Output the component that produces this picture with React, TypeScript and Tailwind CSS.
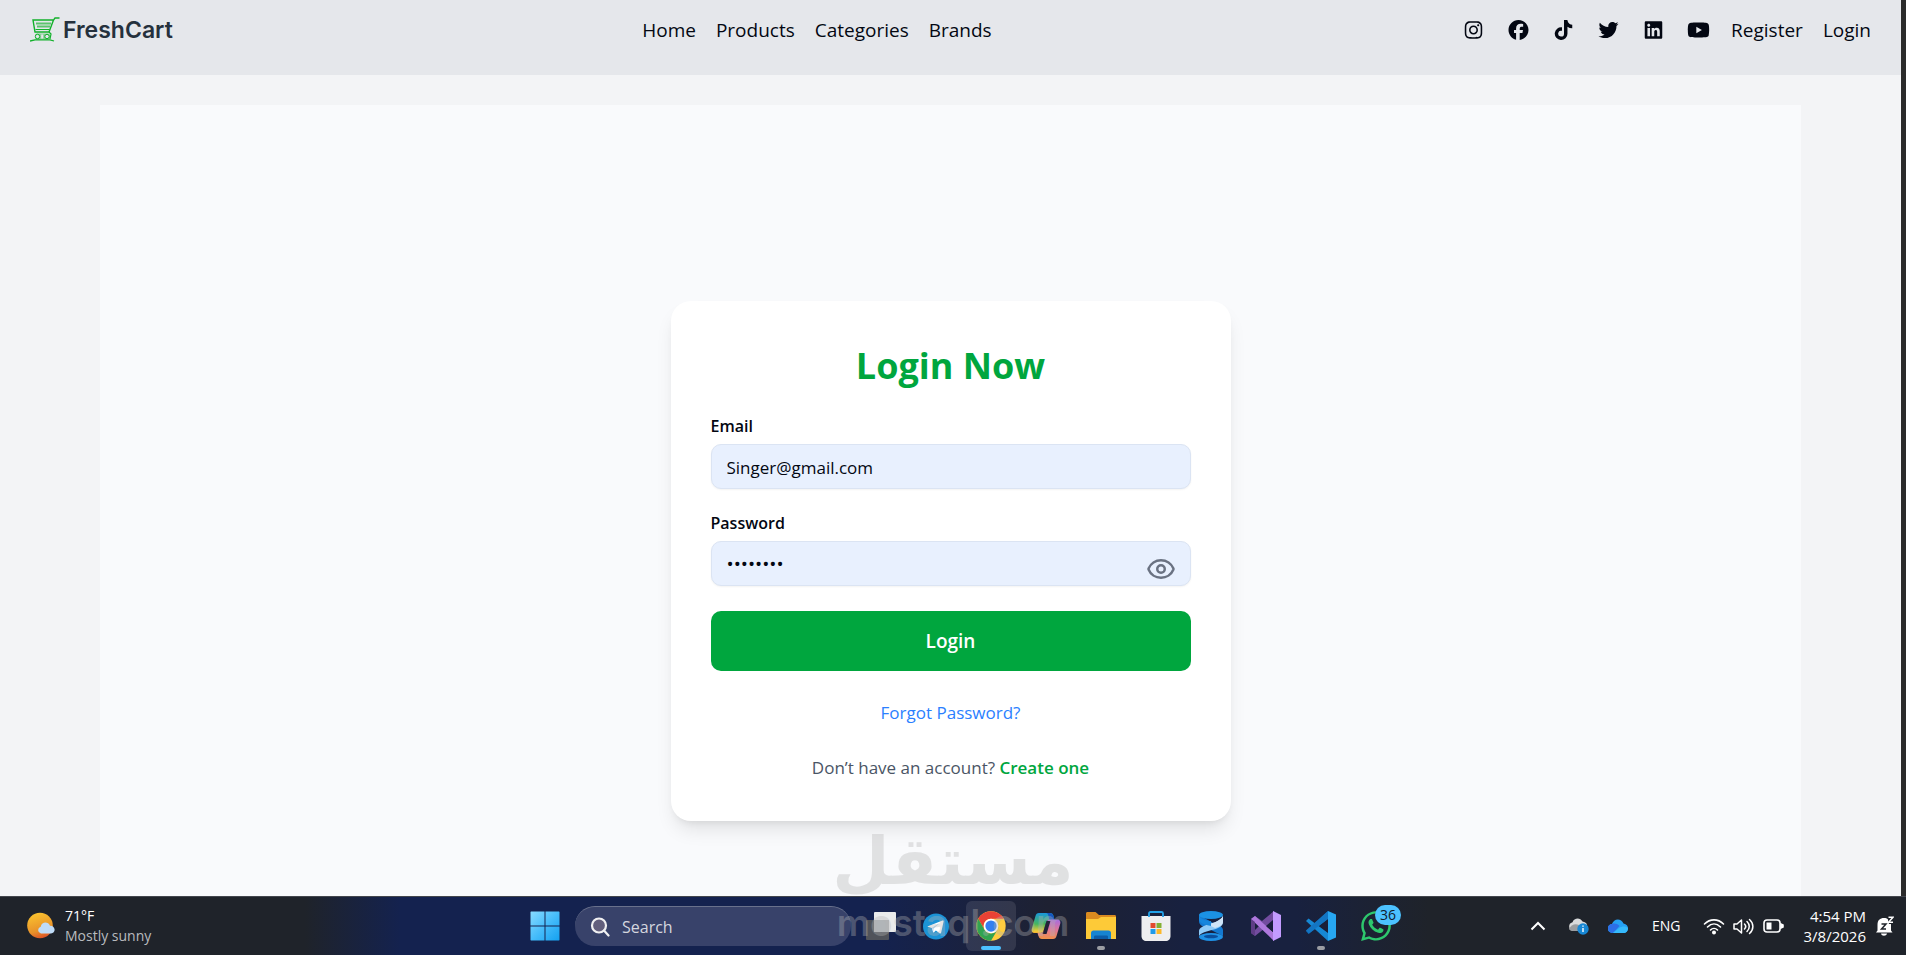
import { useState } from 'react';
import type { ReactNode } from 'react';
import { Eye, EyeOff } from 'lucide-react';
import { FaFacebook, FaInstagram, FaLinkedin, FaTiktok, FaTwitter, FaWhatsapp, FaYoutube } from 'react-icons/fa6';

const links = ['Home', 'Products', 'Categories', 'Brands'];

const socials = [
  { name: 'Instagram', Icon: FaInstagram },
  { name: 'Facebook', Icon: FaFacebook },
  { name: 'TikTok', Icon: FaTiktok },
  { name: 'Twitter', Icon: FaTwitter },
  { name: 'LinkedIn', Icon: FaLinkedin },
  { name: 'YouTube', Icon: FaYoutube },
];

function Logo() {
  return (
    <a href="#" className="flex items-center gap-[3px]">
      <svg width="30" height="26" viewBox="0 0 30 26" fill="none" stroke="#12b12b">
        <path d="M29.500 1H25l-1.500 2L19 15H5L3 3h20" strokeWidth="1.400" />
        <path d="M6 6.500h15M7 9.500h13" strokeWidth="2" strokeOpacity=".65" />
        <path d="M5.500 12.500h14M19 15l2 2-1 5" strokeWidth="1.200" />
        <rect x="5" y="16.500" width="15" height="6" rx="2" fill="#12b12b" fillOpacity=".45" stroke="none" />
        <circle cx="7.500" cy="19.500" r="2.200" fill="#e5e7eb" />
        <circle cx="17" cy="19.500" r="2.200" fill="#e5e7eb" />
        <path d="M12.200 17.500v4" stroke="#e5e7eb" strokeWidth="2" />
        <path d="M0 24l5-1.200h15l4 1.200" strokeWidth="1.300" />
      </svg>
      <span className="font-[Inter,sans-serif] text-[23px] leading-[30px] font-semibold text-[#25313d]">FreshCart</span>
    </a>
  );
}

function Navbar() {
  return (
    <header className="flex items-start justify-between bg-gray-200 px-[30px] pt-[15px] pb-[30px] text-[19px] leading-[30px] text-gray-950">
      <Logo />
      <nav className="flex gap-5">
        {links.map((link) => (
          <a key={link} href="#">{link}</a>
        ))}
      </nav>
      <div className="flex items-center gap-5">
        {socials.map(({ name, Icon }) => (
          <a key={name} href="#" aria-label={name}>
            <Icon className="h-5 w-[25px]" />
          </a>
        ))}
        <a href="#">Register</a>
        <a href="#">Login</a>
      </div>
    </header>
  );
}

function LoginCard() {
  const [showPassword, setShowPassword] = useState(false);
  const input = 'block h-[45px] w-full rounded-[10px] border border-[#dbe4f3] bg-[#e8f0fe] px-[15px] text-gray-950 shadow-xs outline-none';

  return (
    <form className="w-full max-w-[560px] rounded-[20px] bg-white px-10 pt-10 pb-[41px] text-[17px] leading-[25px] shadow-[0_12px_19px_-4px_rgba(0,0,0,0.1),0_5px_8px_-5px_rgba(0,0,0,0.1)]">
      <h1 className="mb-[23px] text-center text-4xl leading-[50px] font-bold text-[#00a63e]">Login Now</h1>

      <label htmlFor="email" className="mb-[5px] block text-base leading-[25px] font-semibold text-gray-950">Email</label>
      <input id="email" type="email" defaultValue="Singer@gmail.com" className={`${input} pt-px text-[17px]`} />

      <label htmlFor="password" className="mt-[22px] mb-[5px] block text-base leading-[25px] font-semibold text-gray-950">Password</label>
      <div className="relative">
        <input id="password" type={showPassword ? 'text' : 'password'} defaultValue="12345678" className={`${input} text-[19px]`} />
        <button
          type="button"
          aria-label="Toggle password"
          onClick={() => setShowPassword(!showPassword)}
          className="absolute top-[13px] right-[15px] text-[#6a7282]"
        >
          {showPassword ? <EyeOff size={30} /> : <Eye size={30} />}
        </button>
      </div>

      <button type="submit" className="mt-[25px] h-[60px] w-full rounded-[10px] bg-[#00a63e] pt-px text-[19px] font-semibold text-white">
        Login
      </button>

      <p className="mt-[29px] text-center">
        <a href="#" className="text-[#2b7fff]">Forgot Password?</a>
      </p>
      <p className="mt-[30px] text-center text-[#4a5565]">
        Don’t have an account? <a href="#" className="font-semibold text-[#00a63e]">Create one</a>
      </p>
    </form>
  );
}

function TaskButton({ label, active, running, children }: { label: string; active?: boolean; running?: boolean; children: ReactNode }) {
  return (
    <button
      aria-label={label}
      className={`relative flex h-[50px] w-[50px] items-center justify-center rounded-md ${active ? 'bg-white/10' : ''}`}
    >
      {children}
      {active && <span className="absolute bottom-px h-1 w-5 rounded-full bg-[#4cc2ff]" />}
      {running && <span className="absolute bottom-px h-1 w-2 rounded-full bg-[#9b9da3]" />}
    </button>
  );
}

function TaskbarApps() {
  return (
    <div className="flex items-center gap-[5px]">
      <TaskButton label="Start">
        <svg width="30" height="30" viewBox="0 0 30 30">
          <defs>
            <linearGradient id="win" x1="0" y1="0" x2="30" y2="30" gradientUnits="userSpaceOnUse">
              <stop stopColor="#8adcff" />
              <stop offset=".5" stopColor="#47bdfb" />
              <stop offset="1" stopColor="#12a0f0" />
            </linearGradient>
          </defs>
          <path fill="url(#win)" d="M1 .5h13.500v14H.5V1zM15.500.500H29l.5.500v13.500h-14zM.5 15.500h14v14H1l-.5-.5zM15.500 15.500h14V29l-.5.500H15.500z" />
        </svg>
      </TaskButton>

      <label className="flex h-10 w-[276px] items-center gap-3 rounded-full border-t border-[#69718c] bg-[#38426a] pl-[15px] text-[#d4d6df]">
        <svg width="20" height="20" viewBox="0 0 20 20" fill="#625f7d" stroke="#f0f0f2" strokeWidth="2.200" strokeLinecap="round">
          <circle cx="9" cy="8.500" r="7" />
          <path d="M14 13.500l4.500 5" />
        </svg>
        <input
          type="text"
          aria-label="Search"
          placeholder="Search"
          className="w-[160px] bg-transparent text-base outline-none placeholder:text-[#d4d6df]"
        />
      </label>

      <TaskButton label="Task view">
        <svg width="32" height="30" viewBox="0 0 32 30">
          <rect x="1" y="9" width="23" height="20" rx="1" fill="#50535a" />
          <rect x="9" y="1" width="22" height="20" rx="1" fill="#e9ebec" />
          <rect x="9" y="9" width="15" height="12" fill="#b1b5b8" />
        </svg>
      </TaskButton>

      <TaskButton label="Telegram">
        <svg width="26" height="27" viewBox="0 0 26 26">
          <circle cx="13" cy="13" r="13" fill="#1c93d6" />
          <path d="M5 12.700L19.500 7c.8-.3 1.300.2 1.100 1.100l-2.400 11c-.2.900-.9 1.100-1.600.6l-3.700-2.700-1.900 1.800c-.3.300-.8.300-.9-.1l-1.300-4.300-3.700-1.100c-.7-.2-.7-.4-.1-.6z" fill="#fff" />
          <path d="M9 14.200l8-5-6.400 6.100-.3 3.200z" fill="#b8d7ec" />
        </svg>
      </TaskButton>

      <TaskButton label="Chrome" active>
        <svg width="30" height="30" viewBox="0 0 48 48">
          <circle cx="24" cy="24" r="23.500" fill="#ffcd40" />
          <path d="M3.650 12.250A23.500 23.500 0 0144.350 12.250H24A12 12 0 0013.600 30z" fill="#e94235" />
          <path d="M3.650 12.250A23.500 23.500 0 0024 47.500L34.400 30A12 12 0 0113.600 30z" fill="#31a350" />
          <circle cx="24" cy="24" r="11.700" fill="#fff" />
          <circle cx="24" cy="24" r="9" fill="#347ff0" />
        </svg>
      </TaskButton>

      <TaskButton label="Copilot">
        <svg width="30" height="28" viewBox="0 0 30 28">
          <defs>
            <linearGradient id="cop1" x1="6" y1="0" x2="6" y2="24" gradientUnits="userSpaceOnUse">
              <stop stopColor="#1695e8" />
              <stop offset=".5" stopColor="#46b65d" />
              <stop offset=".8" stopColor="#f2cb37" />
              <stop offset="1" stopColor="#f07a2a" />
            </linearGradient>
            <linearGradient id="cop2" x1="22" y1="6" x2="20" y2="27" gradientUnits="userSpaceOnUse">
              <stop stopColor="#a16be8" />
              <stop offset=".55" stopColor="#df7799" />
              <stop offset="1" stopColor="#f0914c" />
            </linearGradient>
          </defs>
          <path d="M8 1h11c2 0 3 1 3.500 3l1 4h-5c-2 0-3 1-3.500 3l-2 7c-.5 2-1.500 3-3.500 3H4C1 21 0 19 1 16L4.500 4C5 2 6 1 8 1z" fill="url(#cop1)" />
          <path d="M18.500 1c2 0 3.500 1 4 3l1 4h-5l-1-4c-.5-2-1-3-2.500-3z" fill="#1557c0" />
          <path d="M22 27H11c-2 0-3-1-3.500-3l-1-3h3c2 0 3-1 3.500-3l2.500-8c.5-1.500 1.500-2.500 3.500-2.500h7c3 0 4 2 3 5L25.500 24c-.5 2-1.500 3-3.500 3z" fill="url(#cop2)" />
          <path d="M15.500 9h4l-4 13h-4z" fill="#232338" />
        </svg>
      </TaskButton>

      <TaskButton label="File Explorer" running>
        <svg width="30" height="28" viewBox="0 0 30 28">
          <path d="M0 1.500C0 .7.500 0 1.500 0h8L13 3h15.500c1 0 1.500.5 1.500 1.500V10H0z" fill="#da8b20" />
          <path d="M0 7h12l3-2h15v22H0z" fill="#fdca38" />
          <path d="M5 27v-6c0-1.500 1-2.500 2.500-2.500h15c1.500 0 2.500 1 2.500 2.500v6z" fill="#1784d1" />
          <path d="M8 27v-2c0-1 .5-1.500 1.500-1.500h11c1 0 1.500.5 1.500 1.500v2z" fill="#0c5ca8" />
        </svg>
      </TaskButton>

      <TaskButton label="Microsoft Store">
        <svg width="30" height="30" viewBox="0 0 30 30">
          <path d="M.5 5h29v20c0 3-2 5-5 5h-19c-3 0-5-2-5-5z" fill="#eeeeef" />
          <path d="M8 6V2.500C8 1.500 8.500 1 9.500 1h11c1 0 1.500.5 1.500 1.500V6" fill="none" stroke="#22a2e8" strokeWidth="1.800" />
          <path d="M9.500 12h5v5h-5z" fill="#e24a2e" />
          <path d="M15.500 12h5v5h-5z" fill="#83b034" />
          <path d="M9.500 18h5v5h-5z" fill="#1f9bea" />
          <path d="M15.500 18h5v5h-5z" fill="#fdb928" />
        </svg>
      </TaskButton>

      <TaskButton label="SQL Server Management Studio">
        <svg width="24" height="30" viewBox="0 0 24 30">
          <path d="M0 4v6c0 4 4 6 9 7.500L24 25v-6c0-3-4-5-9-6.500z" fill="#1479d0" />
          <path d="M0 26v-6c0-3 4-5 9-6.500C15 12 24 9 24 4v7c0 4-4 6-9 7.500C9 20 0 22 0 26z" fill="#8fcbf7" />
          <path d="M24 5v6c0 3-4 5-8 6l-7-3.500C15 12 22 9 24 5z" fill="#cfe4f6" />
          <ellipse cx="12" cy="4" rx="12" ry="4" fill="#1b92e4" />
          <path d="M0 4c1 5 10 6 12 6v5C6 14 0 12 0 8z" fill="#1686dc" />
          <ellipse cx="12" cy="26" rx="12" ry="4" fill="#1f91e5" />
          <ellipse cx="12" cy="25.500" rx="7" ry="1.800" fill="#0b4f9c" />
        </svg>
      </TaskButton>

      <TaskButton label="Visual Studio">
        <svg width="30" height="30" viewBox="0 0 30 30">
          <path d="M0 8l4-3 7 5 12-10v10L4 25l-4-3z" fill="#724c9f" />
          <path d="M4 11v8l4-4z" fill="#191f3d" />
          <path d="M0 8l4-3 19 17v8z" fill="#ad78dc" />
          <path d="M0 8v14l4 3V11z" fill="#5e3d86" />
          <path d="M22 0l8 4v22l-8 4z" fill="#c39bff" />
          <path d="M22 9v12l-7-6z" fill="#191f3d" />
        </svg>
      </TaskButton>

      <TaskButton label="VS Code" running>
        <svg width="30" height="30" viewBox="0 0 30 30">
          <path d="M0 20l2.500 3L22 8V0z" fill="#0b67b5" />
          <path d="M0 10l2.500-2.500L22 22v8z" fill="#1688d4" />
          <path d="M0 19.500L22 0v8L3 22.500z" fill="#1375c2" />
          <path d="M22 0l8 3.500v23L22 30z" fill="#27a7f2" />
          <path d="M22 8.500v13L13.500 15z" fill="#1a2039" />
        </svg>
      </TaskButton>

      <TaskButton label="WhatsApp">
        <FaWhatsapp size={34} className="text-[#2dc76d]" />
        <span className="absolute top-[4px] right-0 flex h-5 w-[26px] items-center justify-center rounded-full bg-[#4cc2ff] text-sm leading-5 text-[#10202c]">36</span>
      </TaskButton>
    </div>
  );
}

function Tray() {
  return (
    <div className="flex items-center justify-end text-white">
      <button aria-label="Show hidden icons" className="mr-[22px]">
        <svg width="16" height="10" viewBox="0 0 16 10" fill="none" stroke="currentColor" strokeWidth="2">
          <path d="M1.500 8.500L8 2l6.500 6.500" />
        </svg>
      </button>
      <svg width="22" height="18" viewBox="0 0 22 18" className="mr-[18px]">
        <path d="M5 14a4.500 4.500 0 01-.5-8.800C6 1 12 0 14.500 4.500 18 5 19.500 7 19 10l-3 4z" fill="#d9dadb" />
        <path d="M1 12c2-4 6-6 10-4l5 6H5c-2 0-3.500-1-4-2z" fill="#9b9da0" />
        <circle cx="15" cy="12" r="5.700" fill="#1787d4" />
        <path d="M15 11v4M15 8.500v1.300" stroke="#fff" strokeWidth="1.400" />
      </svg>
      <svg width="20" height="14" viewBox="0 0 20 14" className="mr-6">
        <path d="M4.500 14A4.500 4.500 0 014 5c1.500-5.500 9-6.500 11.500-.5C18.500 5 20 7 20 9.500c0 2.500-2 4.500-4.500 4.500z" fill="#25a0f3" />
        <path d="M4 5c3-1 6 0 7.500 2L5 14C-1.500 14-1.500 5 4 5z" fill="#2d6fe6" />
        <path d="M5 14l6-5c3-2 7-2 9 0 0 3-2 5-4.500 5z" fill="#35b9fb" />
      </svg>
      <span className="mr-[22px] text-sm">ENG</span>
      <svg width="22" height="17" viewBox="0 0 22 17" fill="none" stroke="currentColor" strokeWidth="1.600" strokeLinecap="round" className="mr-2">
        <path d="M1.500 6c5.500-5.500 13.500-5.500 19 0M4.500 9c4-4 9-4 13 0M7.500 12c2-2 5-2 7 0" />
        <circle cx="11" cy="14.500" r="1.200" fill="currentColor" />
      </svg>
      <svg width="21" height="17" viewBox="0 0 21 17" fill="none" stroke="currentColor" strokeWidth="1.500" strokeLinecap="round" strokeLinejoin="round" className="mr-[9px]">
        <path d="M1 6v5h3l4.500 4V2L4 6zM11.500 6c1.500 1.500 1.500 3.500 0 5M14 3.500c3 3 3 7 0 10M16.500 1.500c4.500 4 4.500 10 0 14" />
      </svg>
      <svg width="21" height="14" viewBox="0 0 21 14" fill="none" stroke="currentColor" strokeWidth="1.600" className="mr-5">
        <rect x="1" y="1" width="16" height="12" rx="3" />
        <rect x="3.500" y="3.500" width="5" height="7" fill="currentColor" stroke="none" />
        <path d="M18 5v4l2-1V6z" fill="currentColor" />
      </svg>
      <div className="mr-[10px] text-right text-[15px] leading-5">
        <p>4:54 PM</p>
        <p>3/8/2026</p>
      </div>
      <svg width="18" height="20" viewBox="0 0 18 20" fill="none">
        <path d="M1.500 14.500V9C1.500 4 4 2 8 2s7 2 7 7v5.500l1.500 2H0zM5 17.500h6c-.5 3-5.500 3-6 0z" fill="#fff" />
        <path d="M5.500 8H10l-4.500 5H10" stroke="#1f232a" strokeWidth="1.500" />
        <path d="M11 0h7v8h-5z" fill="#1f232a" />
        <path d="M12.500 1.200H17l-4.500 5H17" stroke="#fff" strokeWidth="1.400" />
      </svg>
    </div>
  );
}

function Taskbar() {
  return (
    <footer className="grid h-[59px] shrink-0 grid-cols-[1fr_auto_1fr] items-center border-t border-[#43464d] bg-[linear-gradient(90deg,#1f232a_16%,#14224f_21%,#14224f_46%,#1e2132_55%,#18213f_62%,#18213f_68%,#1f232a_75%)] pr-3 pl-[27px]">
      <div className="flex items-center gap-[10px]">
        <svg width="28" height="28" viewBox="0 0 28 28">
          <defs>
            <linearGradient id="sun" x1="8" y1="0" x2="16" y2="26" gradientUnits="userSpaceOnUse">
              <stop stopColor="#fbc52f" />
              <stop offset=".7" stopColor="#e8912a" />
              <stop offset="1" stopColor="#dd5126" />
            </linearGradient>
          </defs>
          <circle cx="13" cy="13.500" r="12.800" fill="url(#sun)" />
          <path d="M14 21.500a3.500 3.500 0 01-.3-6.800c1-5 7.500-5.500 9.300-1 6 0 6 7.800 1 7.800z" fill="#bfdcf8" />
        </svg>
        <div className="text-sm leading-5">
          <p className="text-white">71°F</p>
          <p className="text-[#b9bbbf]">Mostly sunny</p>
        </div>
      </div>
      <TaskbarApps />
      <Tray />
    </footer>
  );
}

export default function App() {
  return (
    <div className="relative flex h-screen flex-col overflow-hidden font-['Open_Sans',sans-serif]">
      <div className="flex min-h-0 flex-1">
        <div className="flex min-w-0 flex-1 flex-col bg-gray-100">
          <Navbar />
          <main className="mx-[100px] mt-[30px] flex min-h-0 flex-1 items-start justify-center bg-[#f9fafc] pt-[196px]">
            <LoginCard />
          </main>
        </div>
        <div className="w-[5px] bg-[#2b2b2b]" />
      </div>
      <Taskbar />

      {/* watermark */}
      <div className="pointer-events-none absolute inset-x-0 bottom-3 flex flex-col items-center text-[#b4b4b4] opacity-35">
        <span lang="ar" dir="rtl" className="mb-2 font-['DejaVu_Sans',sans-serif] text-[66px] leading-[66px] font-bold">مستقل</span>
        <span className="font-[Inter,sans-serif] text-[37px] leading-10 font-semibold">mostaql.com</span>
      </div>
    </div>
  );
}
